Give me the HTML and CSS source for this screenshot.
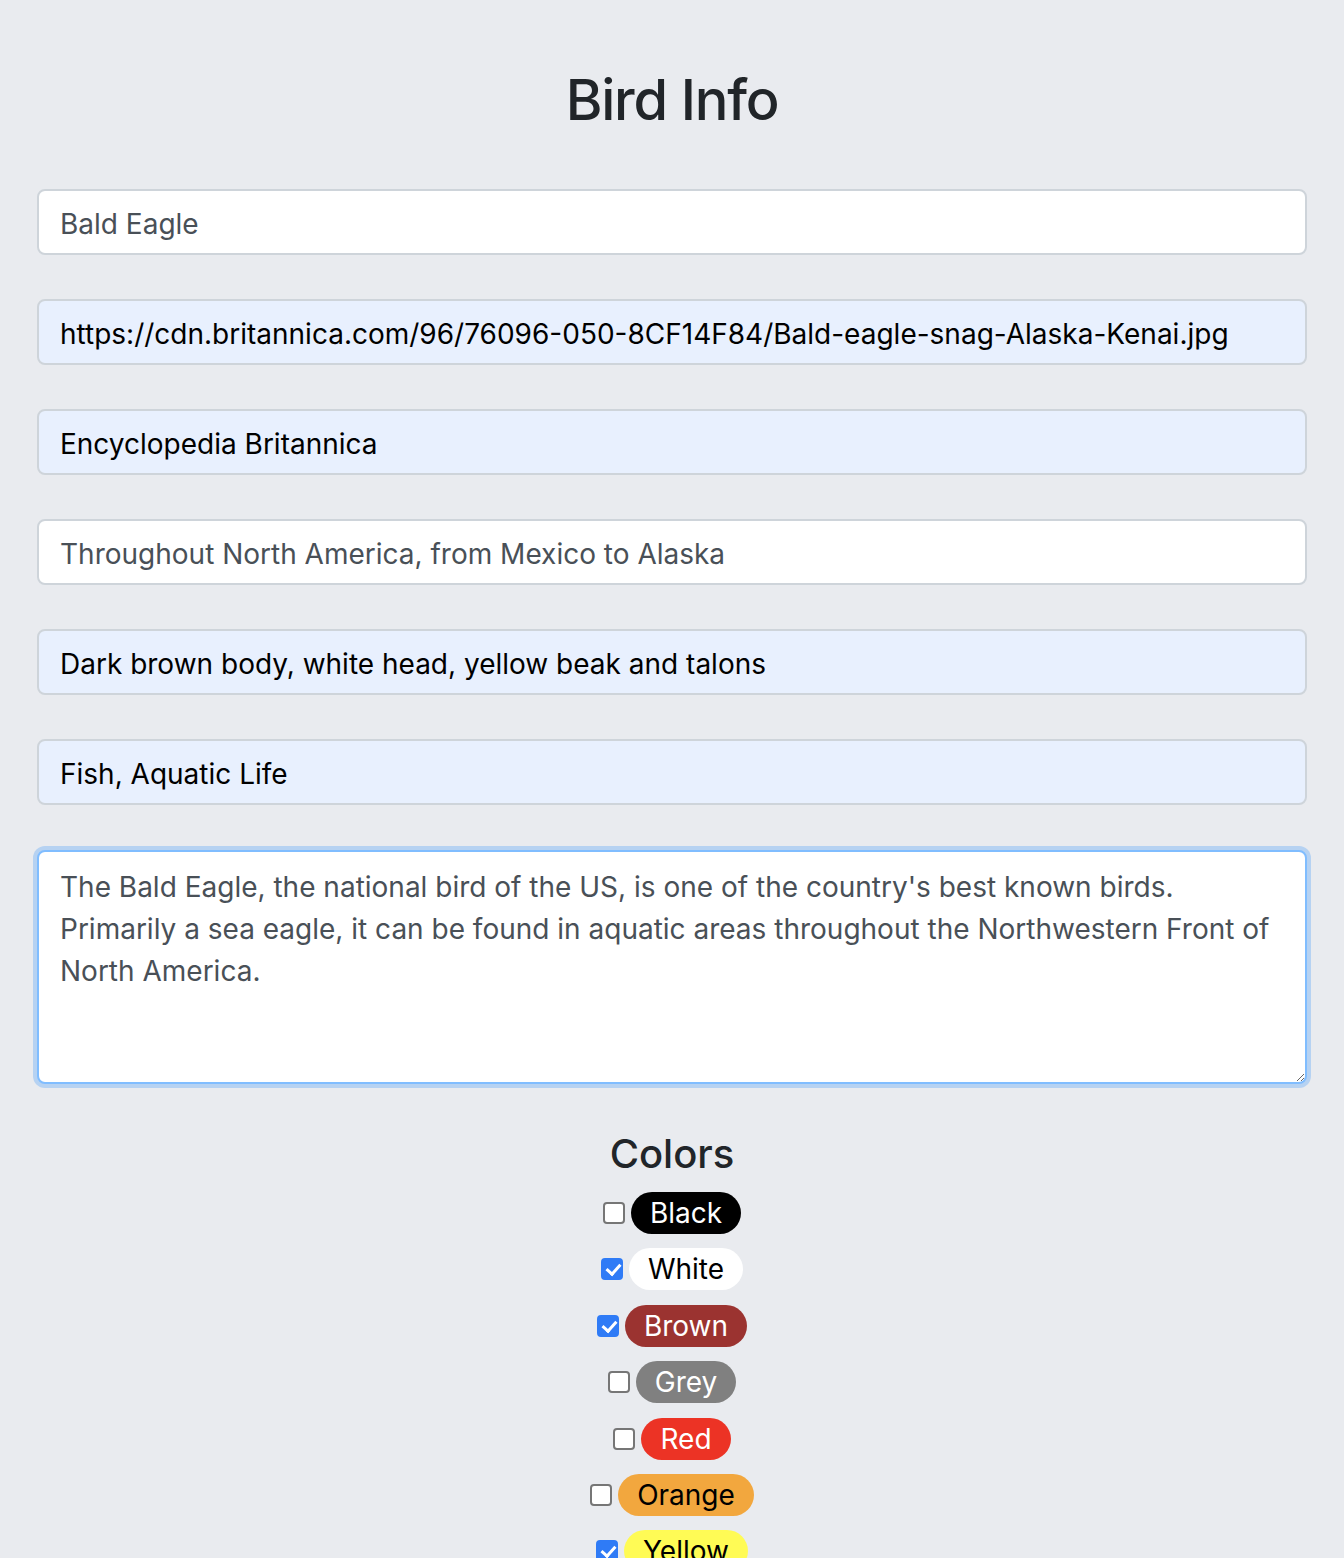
FILE: index.html
```html
<!DOCTYPE html>
<html lang="en">
<head>
<meta charset="utf-8">
<title>Bird Info</title>
<link rel="stylesheet" href="styles.css">
</head>
<body>
<main class="page">
  <h1 class="title">Bird Info</h1>
  <form class="bird-form">
    <input class="field" type="text" value="Bald Eagle">
    <input class="field autofill" type="text" value="https://cdn.britannica.com/96/76096-050-8CF14F84/Bald-eagle-snag-Alaska-Kenai.jpg">
    <input class="field autofill" type="text" value="Encyclopedia Britannica">
    <input class="field" type="text" value="Throughout North America, from Mexico to Alaska">
    <input class="field autofill" type="text" value="Dark brown body, white head, yellow beak and talons">
    <input class="field autofill" type="text" value="Fish, Aquatic Life">
    <textarea class="field area focused">The Bald Eagle, the national bird of the US, is one of the country's best known birds. Primarily a sea eagle, it can be found in aquatic areas throughout the Northwestern Front of North America.</textarea>

    <h3 class="colors-title">Colors</h3>
    <div class="colors">
      <label class="color-row"><span class="check"></span><span class="pill pill-black">Black</span></label>
      <label class="color-row"><span class="check on"></span><span class="pill pill-white">White</span></label>
      <label class="color-row"><span class="check on"></span><span class="pill pill-brown">Brown</span></label>
      <label class="color-row"><span class="check"></span><span class="pill pill-grey">Grey</span></label>
      <label class="color-row"><span class="check"></span><span class="pill pill-red">Red</span></label>
      <label class="color-row"><span class="check"></span><span class="pill pill-orange">Orange</span></label>
      <label class="color-row"><span class="check on"></span><span class="pill pill-yellow">Yellow</span></label>
    </div>
  </form>
</main>
</body>
</html>
```

FILE: styles.css
```css
* { box-sizing: border-box; }

html, body {
  margin: 0;
  padding: 0;
  background: #e9ebef;
}

body {
  font-family: Inter, "Noto Sans", "Liberation Sans", sans-serif;
  color: #212529;
}

.page {
  padding: 0 37px;
}

.title {
  margin: 0;
  padding-top: 68px;
  height: 189px;
  text-align: center;
  font-size: 56px;
  font-weight: 500;
  line-height: 64px;
  letter-spacing: -1.2px;
  color: #212529;
}

.bird-form {
  display: flex;
  flex-direction: column;
}

.field {
  display: block;
  width: 100%;
  height: 66px;
  margin: 0 0 44px 0;
  padding: 12px 21px 8px 21px;
  font-family: inherit;
  font-size: 28px;
  line-height: 42px;
  color: #495057;
  background: #ffffff;
  border: 2px solid #ced4da;
  border-radius: 8px;
  outline: none;
}

.field.autofill {
  background: #e8f0fe;
  color: #000000;
}

.field.area {
  height: 234px;
  resize: vertical;
  margin-top: 1px;
  margin-bottom: 44px;
  padding-top: 14px;
}

.field.focused {
  border-color: #80bdff;
  box-shadow: 0 0 0 4px rgba(0, 123, 255, 0.22);
}

.colors-title {
  margin: 0 0 12px 0;
  text-align: center;
  font-size: 40px;
  font-weight: 500;
  line-height: 52px;
  color: #212529;
}

.colors {
  display: flex;
  flex-direction: column;
  align-items: center;
  gap: 14.4px;
}

.color-row {
  display: flex;
  align-items: center;
  gap: 6px;
}

.check {
  width: 22px;
  height: 22px;
  border: 2px solid #767676;
  border-radius: 4px;
  background: #ffffff;
  position: relative;
}

.check.on {
  background: #2f7bf6;
  border-color: #2f7bf6;
}

.check.on::after {
  content: "";
  position: absolute;
  left: 6px;
  top: 1px;
  width: 6px;
  height: 11px;
  border: solid #ffffff;
  border-width: 0 3px 3px 0;
  transform: rotate(42deg);
}

.pill {
  display: inline-block;
  height: 42px;
  padding: 0 19px;
  border-radius: 21px;
  font-size: 28px;
  line-height: 42px;
}

.pill-black { background: #000000; color: #ffffff; }
.pill-white { background: #ffffff; color: #000000; }
.pill-brown { background: #9b3330; color: #ffffff; }
.pill-grey { background: #808080; color: #ffffff; }
.pill-red { background: #ec3325; color: #ffffff; }
.pill-orange { background: #f2a73e; color: #000000; }
.pill-yellow { background: #fffb55; color: #000000; }
```
